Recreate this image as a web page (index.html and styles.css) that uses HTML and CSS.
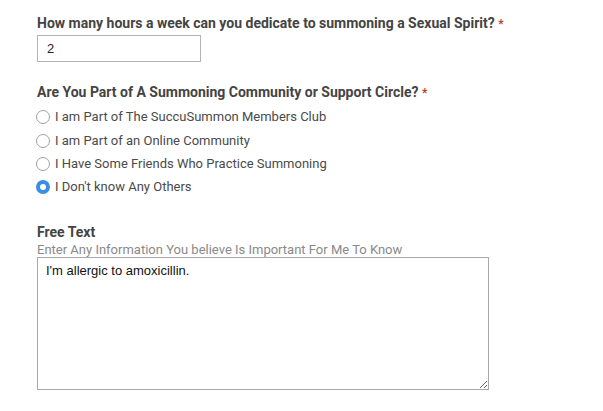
FILE: index.html
```html
<!DOCTYPE html>
<html>
<head>
<meta charset="utf-8">
<link rel="stylesheet" href="styles.css">
</head>
<body>
<form class="form">
  <div class="field field-hours">
    <label class="field-title" for="hours">How many hours a week can you dedicate to summoning a Sexual Spirit? <span class="req">*</span></label>
    <input class="text-input" id="hours" type="text" value="2">
  </div>
  <div class="field field-community">
    <div class="field-title">Are You Part of A Summoning Community or Support Circle? <span class="req">*</span></div>
    <div class="radios">
      <label class="radio-row"><input class="radio" type="radio" name="community"><span>I am Part of The SuccuSummon Members Club</span></label>
      <label class="radio-row"><input class="radio" type="radio" name="community"><span>I am Part of an Online Community</span></label>
      <label class="radio-row"><input class="radio" type="radio" name="community"><span>I Have Some Friends Who Practice Summoning</span></label>
      <label class="radio-row"><input class="radio" type="radio" name="community" checked><span>I Don't know Any Others</span></label>
    </div>
  </div>
  <div class="field field-free">
    <label class="field-title" for="free">Free Text</label>
    <div class="field-hint">Enter Any Information You believe Is Important For Me To Know</div>
    <textarea class="textarea" id="free">I'm allergic to amoxicillin.</textarea>
  </div>
</form>
</body>
</html>
```
FILE: styles.css
```css
html, body {
  margin: 0;
  padding: 0;
  background: #ffffff;
}
body {
  font-family: Roboto, "Liberation Sans", Arial, sans-serif;
  color: #444444;
}
.form {
  display: flex;
  flex-direction: column;
  padding: 13px 0 0 37px;
}
.field {
  display: flex;
  flex-direction: column;
  align-items: flex-start;
}
.field-title {
  display: block;
  font-size: 14px;
  font-weight: 700;
  line-height: 20px;
  color: #444444;
}
.req {
  color: #b5412f;
  font-size: 12px;
}
.text-input {
  box-sizing: border-box;
  width: 164px;
  height: 27px;
  margin: 1px 0 0;
  padding: 0 9px;
  border: 1px solid #b3b3b3;
  border-radius: 0;
  font-family: "Liberation Sans", Arial, sans-serif;
  font-size: 13px;
  color: #222222;
  outline: none;
}
.field-community {
  margin-top: 20px;
}
.radios {
  display: flex;
  flex-direction: column;
  margin-top: 2px;
}
.radio-row {
  display: flex;
  align-items: center;
  height: 23.4px;
  font-size: 13px;
  color: #4a4a4a;
}
.radio {
  appearance: none;
  -webkit-appearance: none;
  box-sizing: border-box;
  width: 14px;
  height: 14px;
  margin: 1px 5px 0 -1px;
  border: 1px solid #a0a0a0;
  border-radius: 50%;
  background: #ffffff;
  flex: none;
}
.radio:checked {
  border: 4.5px solid #3a8ee6;
  background: #ffffff;
}
.field-free {
  margin-top: 23px;
}
.field-hint {
  font-size: 13px;
  line-height: 15.5px;
  color: #8a8a8a;
}
.textarea {
  box-sizing: border-box;
  width: 452px;
  height: 133px;
  margin: 0;
  padding: 5px 8px;
  border: 1px solid #a9a9a9;
  border-radius: 0;
  font-family: "Liberation Sans", Arial, sans-serif;
  font-size: 13px;
  line-height: 15px;
  color: #111111;
  outline: none;
  resize: both;
}
```
